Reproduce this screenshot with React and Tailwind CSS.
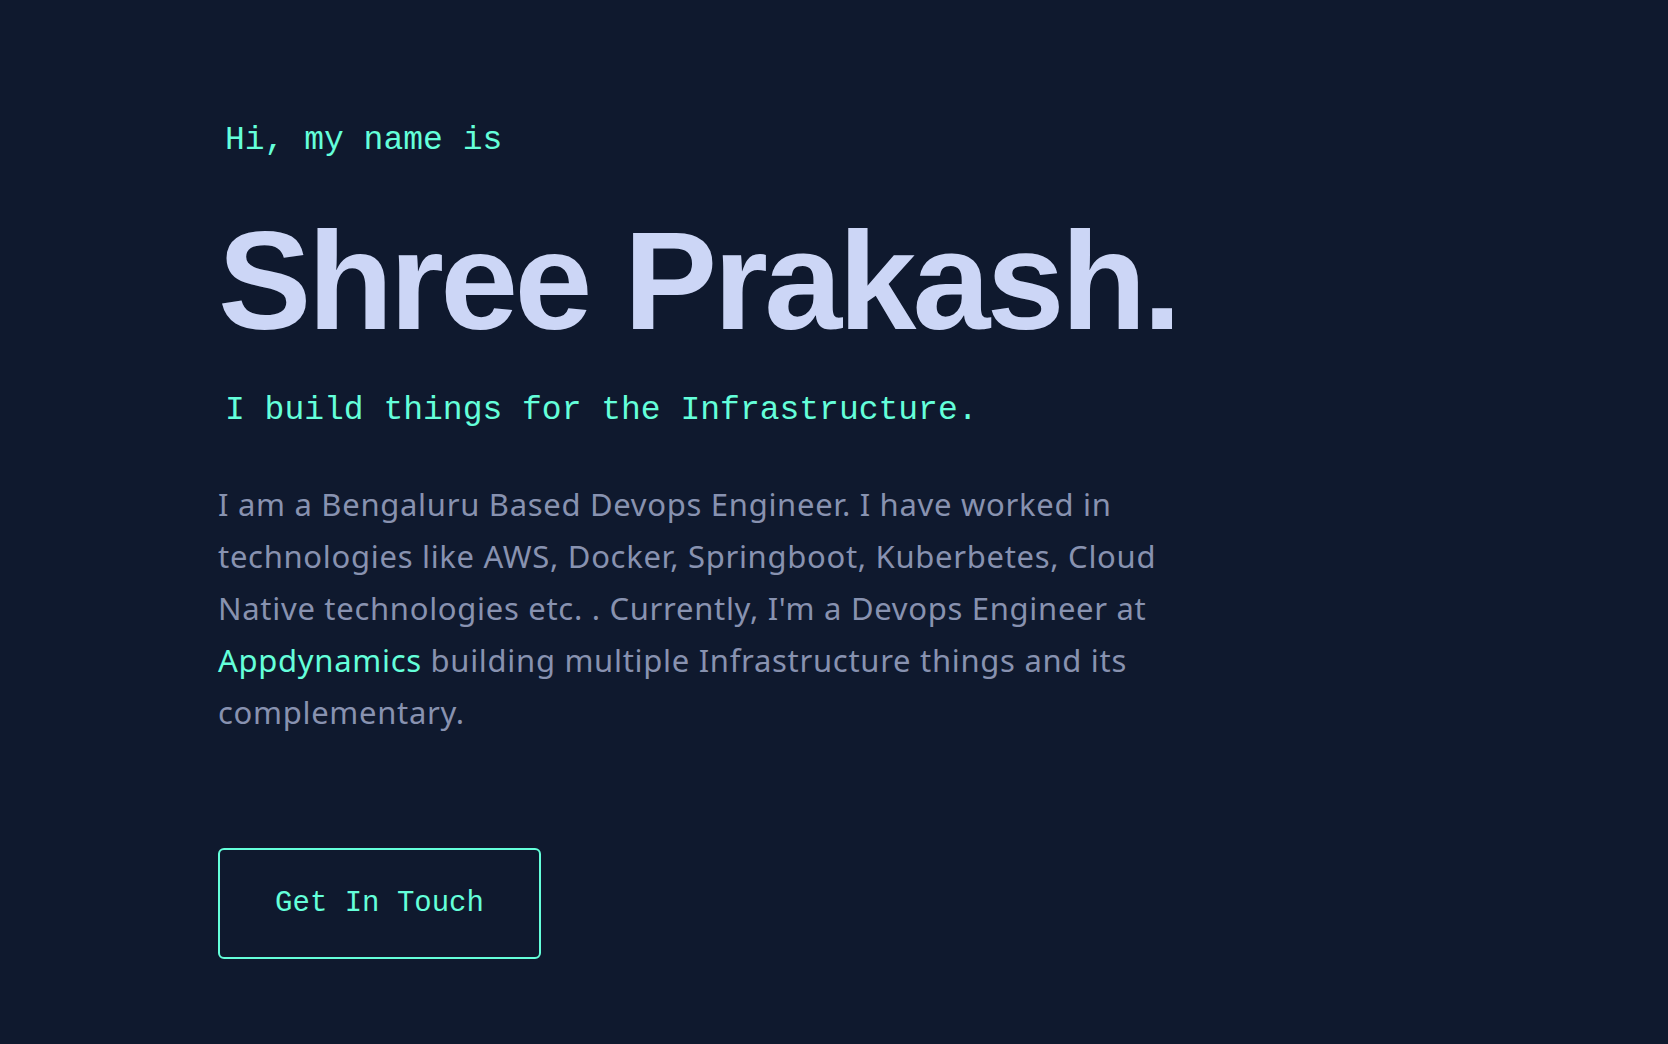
export default function App() {
  return (
    <div className="min-h-[1044px] w-full bg-[#0f192e]">
      <section className="flex flex-col items-start pl-[218px] pt-[124px]">
        <h1 className="ml-[7px] font-['Liberation_Mono','DejaVu_Sans_Mono',monospace] text-[33px] leading-[33px] text-[#64ffda]">
          Hi, my name is
        </h1>
        <h2 className="mt-[54px] font-['Liberation_Sans',Arial,sans-serif] text-[140px] leading-[140px] font-bold tracking-[-3.7px] text-[#ccd6f6]">
          Shree Prakash.
        </h2>
        <h3 className="ml-[7px] mt-[43px] font-['Liberation_Mono','DejaVu_Sans_Mono',monospace] text-[33px] leading-[33px] text-[#64ffda]">
          I build things for the Infrastructure.
        </h3>
        <p className="mt-[51px] max-w-[962px] font-['Noto_Sans',Lato,sans-serif] text-[31px] leading-[52px] tracking-[0.7px] text-[#8892b0]">
          I am a Bengaluru Based Devops Engineer. I have worked in technologies like AWS, Docker,
          Springboot, Kuberbetes, Cloud Native technologies etc. . Currently, I'm a Devops Engineer at{' '}
          <a className="text-[#64ffda]" href="#">Appdynamics</a> building multiple Infrastructure things
          and its complementary.
        </p>
        <a
          href="#"
          className="mt-[110px] flex h-[111px] w-[323px] items-center justify-center rounded-[6px] border-2 border-[#64ffda] font-['Liberation_Mono','DejaVu_Sans_Mono',monospace] text-[29px] text-[#64ffda]"
        >
          Get In Touch
        </a>
      </section>
    </div>
  );
}
